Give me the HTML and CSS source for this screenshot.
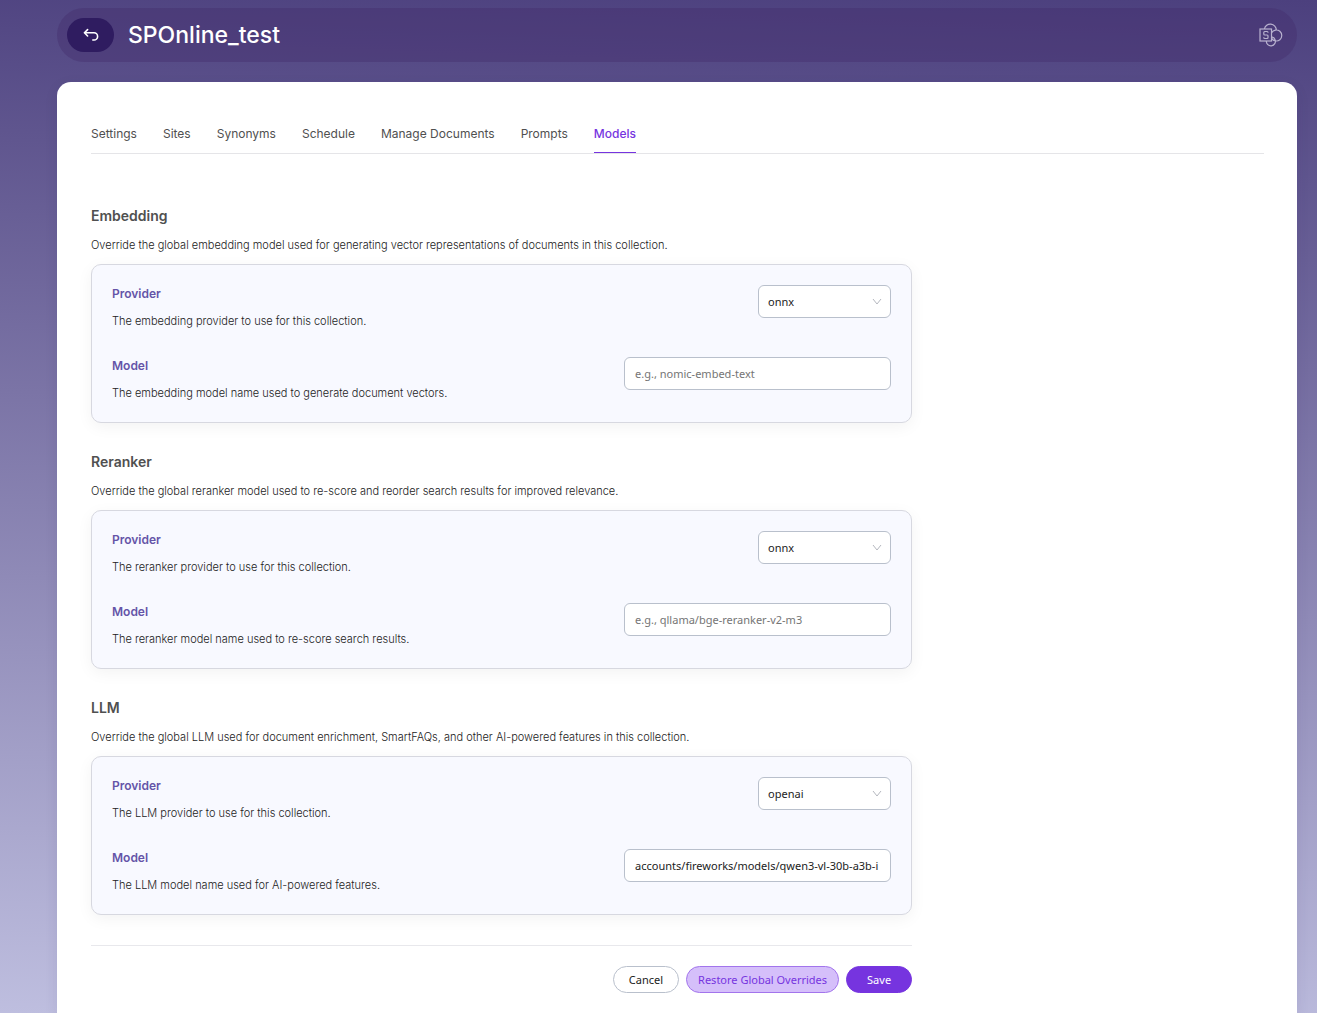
FILE: index.html
```html
<!DOCTYPE html>
<html lang="en">
<head>
<meta charset="utf-8">
<meta name="viewport" content="width=device-width, initial-scale=1">
<title>SPOnline_test</title>
<link rel="stylesheet" href="styles.css">
</head>
<body>
<header class="topbar">
  <button class="back" type="button" aria-label="Back">
    <svg width="16" height="14" viewBox="0 0 16 14" fill="none" stroke="currentColor" stroke-width="1.6" stroke-linecap="round" stroke-linejoin="round"><path d="M4.6 1.6 1.4 4.8 4.6 8M1.6 4.8H11a3.6 3.6 0 0 1 0 7.2H9.8"/></svg>
  </button>
  <h1 class="title">SPOnline_test</h1>
  <svg class="source" width="24" height="24" viewBox="0 0 24 24" fill="none" stroke="currentColor" stroke-width="1.2"><path d="M5.4 6a6 6 0 0 1 11.9 1.2M12.6 9.6a5.5 5.5 0 1 1 0 5.8M7.4 18a4.5 4.5 0 1 0 8.7-1.2M12.6 13.9a4.3 4.3 0 0 1 3.5 2.9"/><rect x="1" y="6" width="11.5" height="12"/><path d="M9 9.8V9.4q0-.9-.9-.9H5.7q-.9 0-.9.9v1.7q0 .9.9.9h2.4q.9 0 .9.9v1.7q0 .9-.9.9H5.7q-.9 0-.9-.9v-.4"/></svg>
</header>
<main class="sheet">
  <nav class="tabs">
    <a class="tab" href="#settings">Settings</a>
    <a class="tab" href="#sites">Sites</a>
    <a class="tab" href="#synonyms">Synonyms</a>
    <a class="tab" href="#schedule">Schedule</a>
    <a class="tab" href="#documents">Manage Documents</a>
    <a class="tab" href="#prompts">Prompts</a>
    <a class="tab active" href="#models" aria-current="page">Models</a>
  </nav>
  <form class="models">
    <section class="group">
      <h2 class="heading">Embedding</h2>
      <p class="hint">Override the global embedding model used for generating vector representations of documents in this collection.</p>
      <div class="panel">
        <div class="row">
          <div class="info"><label class="label" for="emb-provider">Provider</label><p class="note">The embedding provider to use for this collection.</p></div>
          <div class="picker"><select class="control" id="emb-provider"><option>onnx</option><option>openai</option></select><svg class="chevron" width="10" height="8" viewBox="0 0 10 8" fill="none" stroke="currentColor"><path d="M1 1l4 5 4-5"/></svg></div>
        </div>
        <div class="row">
          <div class="info"><label class="label" for="emb-model">Model</label><p class="note">The embedding model name used to generate document vectors.</p></div>
          <input class="control wide" id="emb-model" type="text" placeholder="e.g., nomic-embed-text">
        </div>
      </div>
    </section>
    <section class="group">
      <h2 class="heading">Reranker</h2>
      <p class="hint">Override the global reranker model used to re-score and reorder search results for improved relevance.</p>
      <div class="panel">
        <div class="row">
          <div class="info"><label class="label" for="rank-provider">Provider</label><p class="note">The reranker provider to use for this collection.</p></div>
          <div class="picker"><select class="control" id="rank-provider"><option>onnx</option><option>openai</option></select><svg class="chevron" width="10" height="8" viewBox="0 0 10 8" fill="none" stroke="currentColor"><path d="M1 1l4 5 4-5"/></svg></div>
        </div>
        <div class="row">
          <div class="info"><label class="label" for="rank-model">Model</label><p class="note">The reranker model name used to re-score search results.</p></div>
          <input class="control wide" id="rank-model" type="text" placeholder="e.g., qllama/bge-reranker-v2-m3">
        </div>
      </div>
    </section>
    <section class="group">
      <h2 class="heading">LLM</h2>
      <p class="hint">Override the global LLM used for document enrichment, SmartFAQs, and other AI-powered features in this collection.</p>
      <div class="panel">
        <div class="row">
          <div class="info"><label class="label" for="llm-provider">Provider</label><p class="note">The LLM provider to use for this collection.</p></div>
          <div class="picker"><select class="control" id="llm-provider"><option>openai</option><option>onnx</option></select><svg class="chevron" width="10" height="8" viewBox="0 0 10 8" fill="none" stroke="currentColor"><path d="M1 1l4 5 4-5"/></svg></div>
        </div>
        <div class="row">
          <div class="info"><label class="label" for="llm-model">Model</label><p class="note">The LLM model name used for AI-powered features.</p></div>
          <input class="control wide" id="llm-model" type="text" value="accounts/fireworks/models/qwen3-vl-30b-a3b-i">
        </div>
      </div>
    </section>
    <div class="actions">
      <button class="btn" type="button">Cancel</button>
      <button class="btn soft" type="button">Restore Global Overrides</button>
      <button class="btn primary" type="submit">Save</button>
    </div>
  </form>
</main>
</body>
</html>
```
FILE: styles.css
```css
* { box-sizing: border-box; }

html { min-height: 100%; }

body {
  margin: 0;
  min-height: 100vh;
  padding: 8px 20px 0 57px;
  display: flex;
  flex-direction: column;
  gap: 20px;
  font-family: Inter, "Liberation Sans", sans-serif;
  color: #505050;
  background: linear-gradient(182deg, #4c407e 0%, #bebedf 100%);
}

h1, h2, p { margin: 0; }

.topbar {
  display: flex;
  align-items: center;
  height: 54px;
  padding: 0 14px 0 10px;
  border-radius: 27px;
  background: rgba(67, 45, 108, 0.4);
}

.back {
  display: flex;
  align-items: center;
  justify-content: center;
  width: 47px;
  height: 34px;
  padding: 0;
  border: 0;
  border-radius: 17px;
  background: #2f1c60;
  color: #fff;
}

.title {
  flex: 1;
  margin-left: 14px;
  font-size: 23px;
  line-height: 28px;
  font-weight: 500;
  color: #fff;
}

.source { color: #b9b2cf; }

.sheet {
  flex: 1;
  padding: 42px 33px 20px 34px;
  border-radius: 14px 14px 0 0;
  background: #fff;
  box-shadow: 0 4px 14px rgba(40, 30, 90, 0.09);
}

.tabs {
  display: flex;
  gap: 26px;
  border-bottom: 1px solid #e5e5e8;
}

.tab {
  height: 29px;
  font-size: 12px;
  line-height: 20px;
  font-weight: 400;
  color: #505050;
  text-decoration: none;
}

.tab.active {
  color: #7634df;
  font-weight: 500;
  border-bottom: 1px solid #7634df;
}

.models {
  width: 70%;
  padding-top: 52px;
}

.group + .group { margin-top: 29px; }

.heading {
  font-size: 14px;
  line-height: 20px;
  font-weight: 600;
}

.hint {
  margin: 9px 0;
  font-size: 11px;
  line-height: 20px;
  font-weight: 300;
  color: #222;
}

.panel {
  display: flex;
  flex-direction: column;
  gap: 25px;
  padding: 19px 20px;
  border: 1px solid #d7d8e0;
  border-radius: 10px;
  background: #f8f9ff;
  box-shadow: 0 4px 16px rgba(0, 0, 0, 0.05);
}

.row {
  display: flex;
  justify-content: space-between;
  align-items: flex-start;
}

.label {
  display: block;
  font-size: 12px;
  line-height: 20px;
  font-weight: 600;
  color: #6554a8;
}

.note {
  margin-top: 7px;
  font-size: 11px;
  line-height: 20px;
  font-weight: 300;
  color: #222;
}

.picker {
  position: relative;
  width: 133px;
}

.control {
  display: block;
  width: 100%;
  height: 33px;
  margin-top: 1px;
  padding: 0 9px;
  border: 1px solid #b9c0cc;
  border-radius: 6px;
  background: #fff;
  color: #222;
  font-family: "Noto Sans", sans-serif;
  font-size: 11px;
  appearance: none;
}

.control.wide {
  width: 267px;
  padding: 0 9px 0 10px;
}

.control::placeholder { color: #757575; }

.chevron {
  position: absolute;
  right: 9px;
  top: 14px;
  color: #b5b8bf;
  pointer-events: none;
}

.actions {
  display: flex;
  justify-content: flex-end;
  gap: 7px;
  margin-top: 30px;
  padding-top: 20px;
  border-top: 1px solid #e8e8ec;
}

.btn {
  height: 27px;
  padding: 0 15px;
  border: 1px solid #b9c0cc;
  border-radius: 14px;
  background: #fff;
  color: #222;
  font-family: "Noto Sans", sans-serif;
  font-size: 11px;
}

.btn.soft {
  padding: 0 11px;
  border-color: #a274ec;
  background: #d5bffa;
  color: #7634df;
}

.btn.primary {
  padding: 0 20px;
  border-color: #7634df;
  background: #7634df;
  color: #fff;
}
```
